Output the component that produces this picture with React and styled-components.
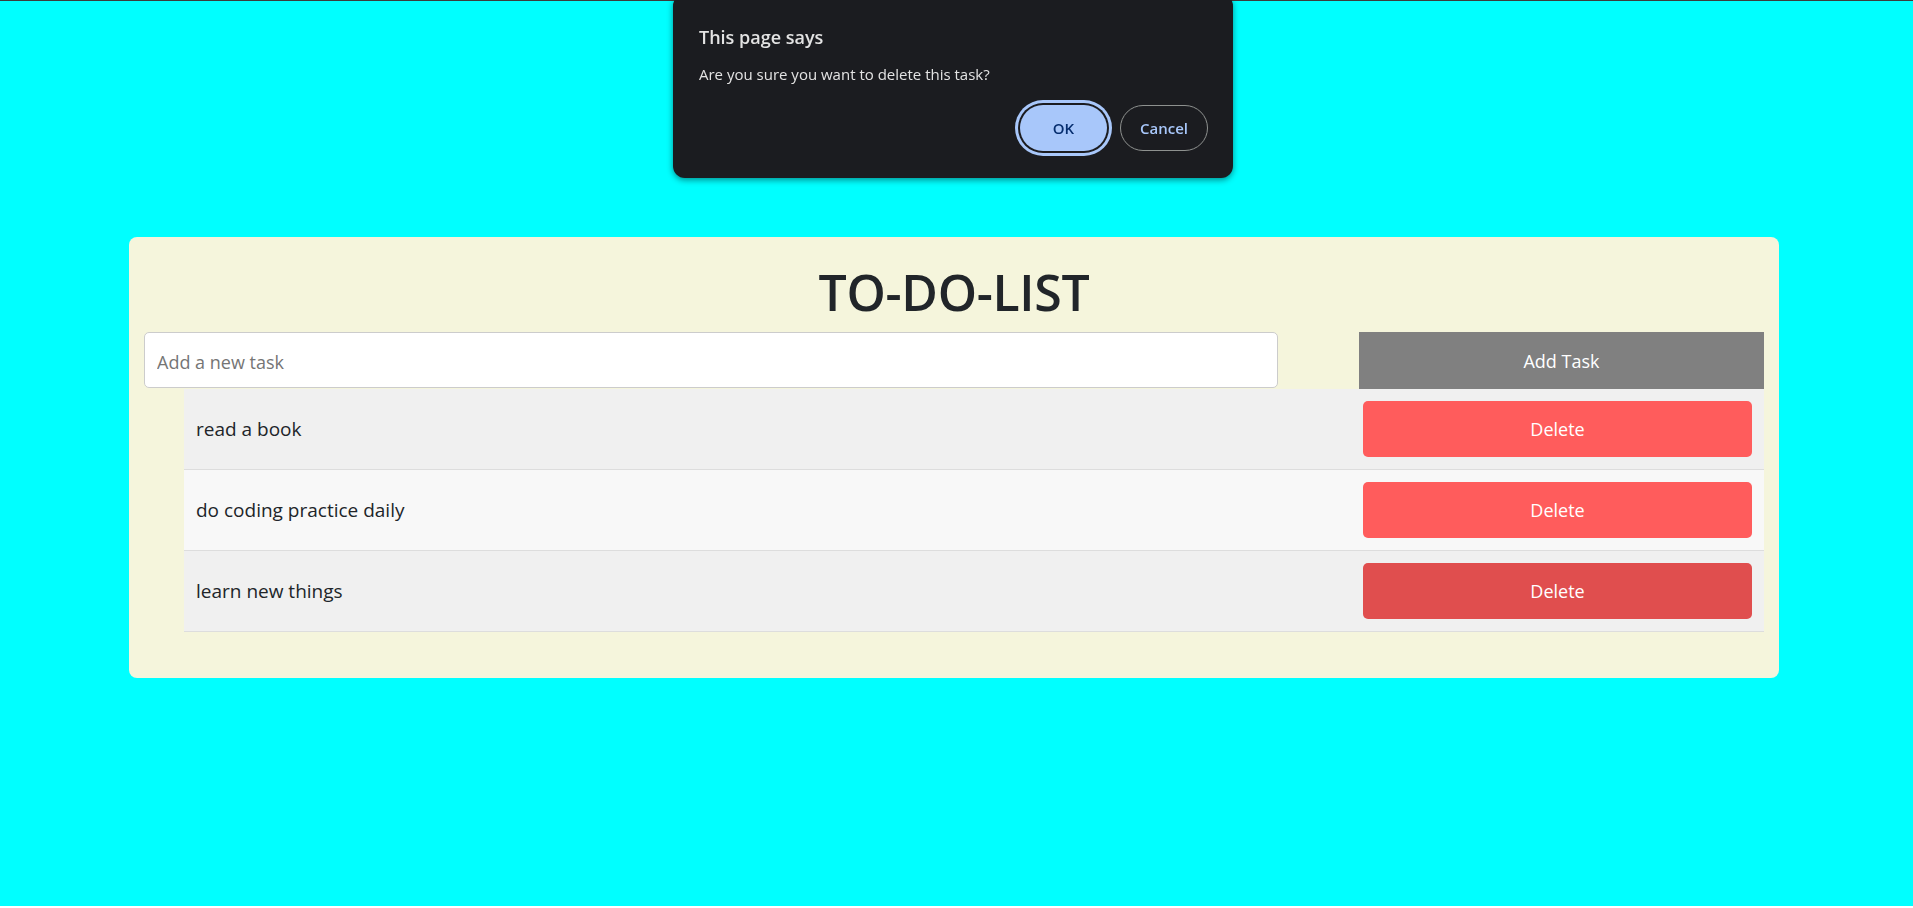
import React, { useState } from "react";
import styled, { createGlobalStyle } from "styled-components";

const GlobalStyle = createGlobalStyle`
  html {
    background: #ffffff;
  }
  body {
    margin: 0;
    min-height: 906px;
    background: #00ffff;
    border-top: 1px solid #3c3c3c;
    font-family: "Open Sans", "Noto Sans", sans-serif;
    color: #212529;
  }
  * {
    box-sizing: border-box;
  }
`;

const initialTasks = ["read a book", "do coding practice daily", "learn new things"];

const App = () => {
  const [tasks, setTasks] = useState(initialTasks);
  const [text, setText] = useState("");

  const addTask = () => {
    if (!text.trim()) return;
    setTasks([...tasks, text.trim()]);
    setText("");
  };

  return (
    <>
      <GlobalStyle />
      <Page>
        <Card>
          <Title>TO-DO-LIST</Title>
          <InputRow>
            <TaskInput
              placeholder="Add a new task"
              value={text}
              onChange={e => setText(e.target.value)}
            />
            <AddButton onClick={addTask}>Add Task</AddButton>
          </InputRow>
          <TaskList>
            {tasks.map((task, i) => (
              <TaskItem key={task + i} striped={i % 2 === 1}>
                <TaskText>{task}</TaskText>
                <DeleteButton hovered={i === 2}>Delete</DeleteButton>
              </TaskItem>
            ))}
          </TaskList>
        </Card>
      </Page>
      <Dialog>
        <DialogTitle>This page says</DialogTitle>
        <DialogMessage>Are you sure you want to delete this task?</DialogMessage>
        <DialogButtons>
          <OkButton>OK</OkButton>
          <CancelButton>Cancel</CancelButton>
        </DialogButtons>
      </Dialog>
    </>
  );
};

const Page = styled.div`
  padding-top: 236px;
`;
const Card = styled.section`
  width: 1650px;
  margin-left: 129px;
  padding: 15px 15px 46px;
  background: #f5f5dc;
  border-radius: 8px;
`;
const Title = styled.h1`
  margin: 9px 0;
  text-align: center;
  font-size: 50px;
  line-height: 62px;
  font-weight: 600;
  letter-spacing: -0.3px;
  color: #212529;
`;
const InputRow = styled.div`
  display: flex;
  justify-content: space-between;
`;
const TaskInput = styled.input`
  width: 70%;
  height: 56px;
  padding: 3px 12px 0;
  border: 1px solid #cccccc;
  border-radius: 5px;
  background: #ffffff;
  font-family: "Open Sans", sans-serif;
  font-size: 18px;
  color: #212529;
  outline: none;
  ::placeholder {
    color: #767676;
  }
`;
const AddButton = styled.button`
  width: 25%;
  height: 57px;
  padding-top: 2px;
  border: none;
  background: #808080;
  color: #ffffff;
  font-family: "Open Sans", sans-serif;
  font-size: 18px;
  cursor: pointer;
`;
const TaskList = styled.ul`
  margin: 0;
  padding: 0 0 0 40px;
  list-style: none;
`;
const TaskItem = styled.li`
  display: flex;
  align-items: center;
  justify-content: space-between;
  padding: 12px;
  background: ${props => (props.striped ? "#f8f8f8" : "#f0f0f0")};
  border-bottom: 1px solid #dddddd;
`;
const TaskText = styled.span`
  font-size: 19px;
  color: #212529;
`;
const DeleteButton = styled.button`
  width: 25%;
  height: 56px;
  border: none;
  border-radius: 5px;
  background: ${props => (props.hovered ? "#e04e4e" : "#ff5c5c")};
  color: #ffffff;
  font-family: "Open Sans", sans-serif;
  font-size: 18px;
  cursor: pointer;
  :hover {
    background: #e04e4e;
  }
`;
const Dialog = styled.div`
  position: fixed;
  top: -6px;
  left: 673px;
  width: 560px;
  height: 184px;
  padding: 31px 25px 0 26px;
  background: #1b1c20;
  border-radius: 12px;
  box-shadow: 0 2px 6px rgba(0, 0, 0, 0.45);
  display: flex;
  flex-direction: column;
`;
const DialogTitle = styled.div`
  font-size: 18px;
  line-height: 24px;
  font-weight: 600;
  color: #e3e3e3;
`;
const DialogMessage = styled.div`
  margin-top: 15px;
  font-size: 15px;
  line-height: 20px;
  color: #e3e3e3;
`;
const DialogButtons = styled.div`
  margin-top: 21px;
  display: flex;
  justify-content: flex-end;
  align-items: center;
  gap: 13px;
`;
const OkButton = styled.button`
  width: 87px;
  height: 46px;
  border: none;
  border-radius: 23px;
  background: #a8c7fa;
  color: #062e6f;
  font-family: "Open Sans", sans-serif;
  font-size: 15px;
  font-weight: 600;
  box-shadow: 0 0 0 2px #1b1c20, 0 0 0 5px #a8c7fa;
`;
const CancelButton = styled.button`
  width: 88px;
  height: 46px;
  border: 1px solid #8e918f;
  border-radius: 23px;
  background: transparent;
  color: #a8c7fa;
  font-family: "Open Sans", sans-serif;
  font-size: 15px;
  font-weight: 600;
`;

export default App;
